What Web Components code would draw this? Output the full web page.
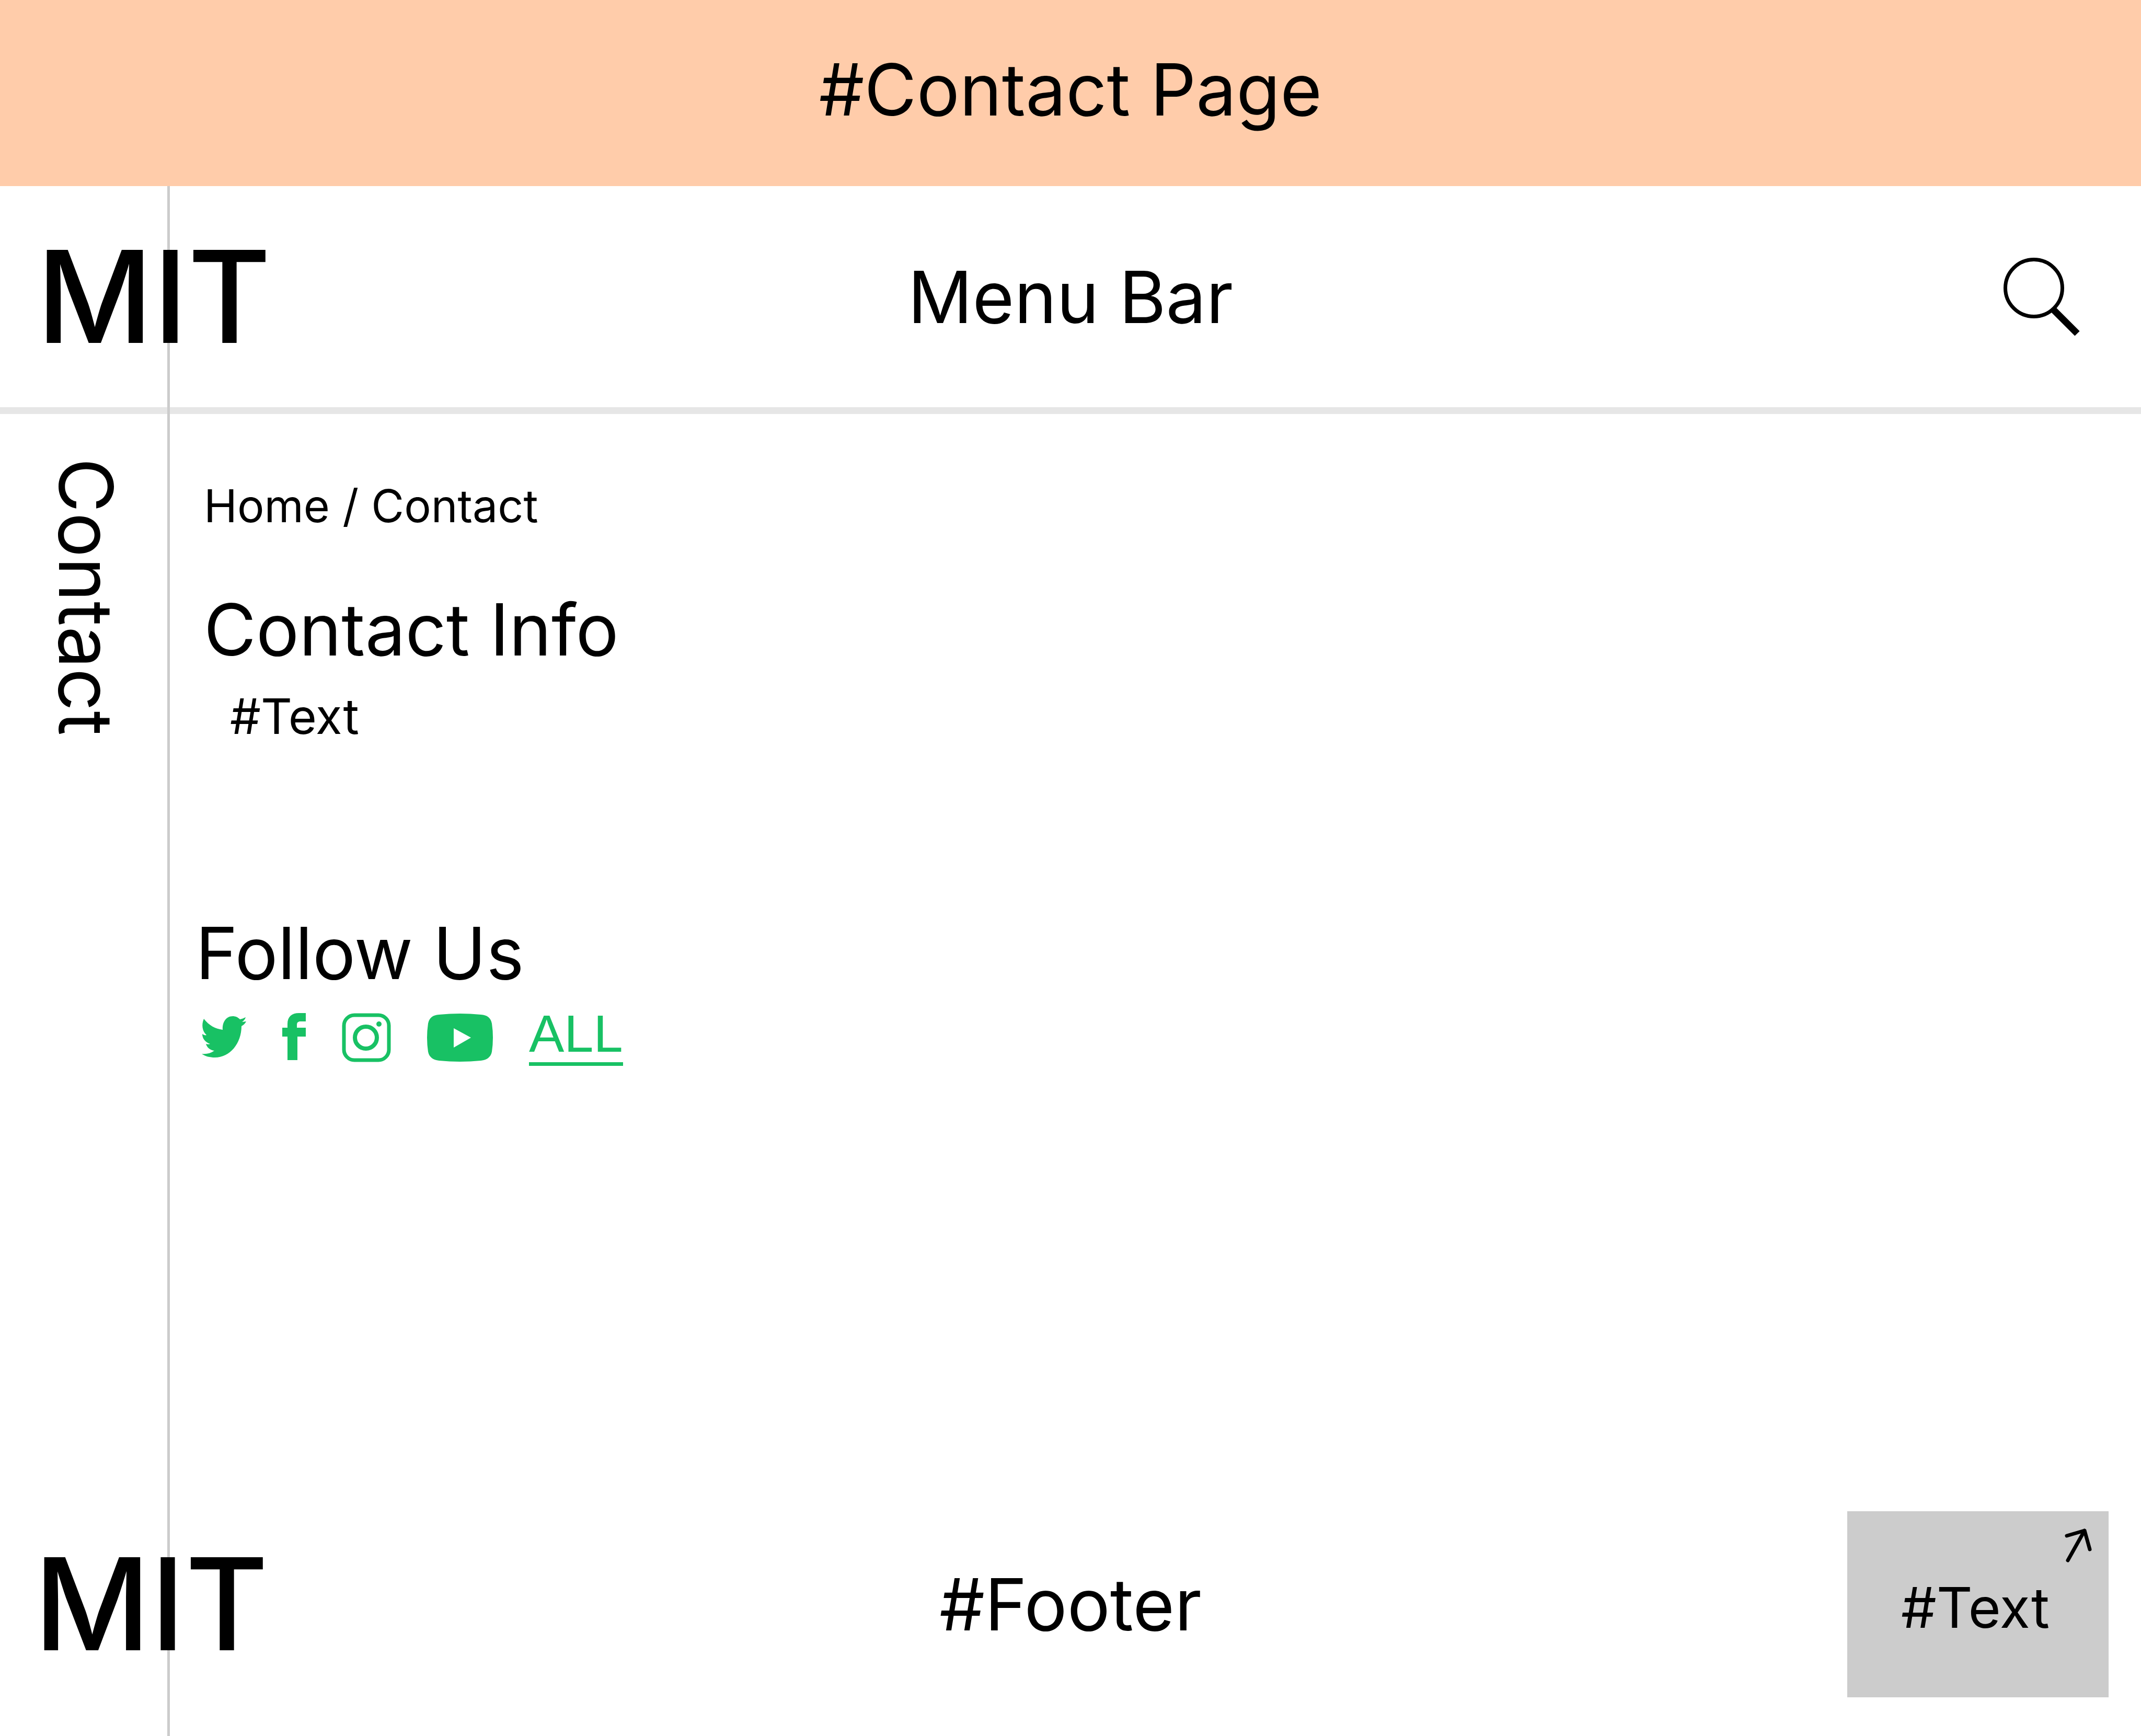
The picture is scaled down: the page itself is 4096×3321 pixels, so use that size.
<!DOCTYPE html>
<html lang="en">
<head>
<meta charset="utf-8">
<title>Contact Page</title>
<style>
  :root {
    --ink: #000;
    --peach: #ffccaa;
    --grey: #ccc;
    --rule: #e6e6e6;
    --green: #18c164;
    --rail: 320px;
    --size-title: 137px;
    --line-title: 164px;
  }
  body {
    margin: 0;
    background: #fff;
    color: var(--ink);
    font-family: Inter, "Liberation Sans", sans-serif;
    font-weight: 400;
  }
</style>
</head>
<body>
<contact-page></contact-page>

<template id="page-banner">
  <style>
    :host { display: flex; align-items: center; justify-content: center; box-sizing: border-box; height: 356px; padding-bottom: 14px; background: var(--peach); }
    h1 { margin: 0; font-size: var(--size-title); line-height: var(--line-title); font-weight: inherit; }
  </style>
  <h1><slot></slot></h1>
</template>

<template id="site-logo">
  <style>
    :host { display: block; }
    a { color: inherit; text-decoration: none; font-size: 244px; line-height: 300px; font-weight: 500; }
  </style>
  <a href="#home"><slot></slot></a>
</template>

<template id="menu-bar">
  <style>
    :host { display: grid; grid-template-columns: 1fr auto 1fr; align-items: center; height: 423px; border-bottom: 13px solid var(--rule); }
    site-logo { padding-left: 70px; z-index: 1; }
    nav { font-size: var(--size-title); line-height: var(--line-title); }
    button { justify-self: end; margin-right: 116px; padding: 0; border: 0; background: none; color: inherit; }
    svg { display: block; width: 150px; height: 150px; }
  </style>
  <site-logo>MIT</site-logo>
  <nav aria-label="Main"><slot></slot></nav>
  <button type="button" aria-label="Search">
    <svg viewBox="0 0 150 150" fill="none" stroke="currentColor">
      <circle cx="61" cy="58" r="54.5" stroke-width="7"/>
      <path d="M99 100L144 145" stroke-width="13"/>
    </svg>
  </button>
</template>

<template id="side-rail">
  <style>
    :host { display: flex; justify-content: center; flex: none; box-sizing: border-box; width: var(--rail); padding: 84px 0 0 10px; }
    span { writing-mode: vertical-rl; font-size: 143px; line-height: var(--line-title); }
  </style>
  <span><slot></slot></span>
</template>

<template id="bread-crumbs">
  <style>
    :host { display: block; font-size: 86px; line-height: 100px; }
    a { color: inherit; text-decoration: none; }
  </style>
  <nav aria-label="Breadcrumb"><a href="#home">Home</a> / <a href="#contact" aria-current="page">Contact</a></nav>
</template>

<template id="info-section">
  <style>
    :host { display: block; }
    h2 { margin: 0; font-size: var(--size-title); line-height: var(--line-title); font-weight: inherit; }
  </style>
  <h2><slot name="title"></slot></h2>
  <slot></slot>
</template>

<template id="social-links">
  <style>
    :host { display: flex; align-items: flex-start; gap: 67px; margin-top: 32px; padding-left: 10px; color: var(--green); }
    a { display: block; color: inherit; text-decoration: none; }
    svg { display: block; height: 96px; fill: currentColor; }
    .all { border-bottom: 7px solid; padding-bottom: 15px; font: 400 101px/80px "Liberation Sans", sans-serif; }
  </style>
  <a href="#twitter" aria-label="Twitter">
    <svg width="88" viewBox="0 0 88 96"><path d="M6 12C16 25 28 31 42 33C41 18 49 7 61 7C67 7 71 9 75 13C79 12 82 11 86 9C85 13 82 16 79 18L87 17C85 21 82 24 78 26C78 59 56 86 27 86C18 86 9 84 2 79C11 80 19 78 26 73C18 72 12 67 10 60C13 61 16 61 18 60C9 57 3 50 3 41C6 43 9 44 11 43C3 36 1 23 6 12Z"/></svg>
  </a>
  <a href="#facebook" aria-label="Facebook">
    <svg width="48" viewBox="0 0 48 96"><path d="M11 91V46H1V29H11V22C11 8 19 1 33 1H46V17H36C31 17 29 19 29 24V29H46V46H30V91Z"/></svg>
  </a>
  <a href="#instagram" aria-label="Instagram">
    <svg width="94" viewBox="0 0 94 96"><rect x="4" y="5" width="86" height="86" rx="20" fill="none" stroke="currentColor" stroke-width="7"/><circle cx="46" cy="48" r="21" fill="none" stroke="currentColor" stroke-width="8"/><circle cx="71" cy="22" r="5"/></svg>
  </a>
  <a href="#youtube" aria-label="YouTube">
    <svg width="130" viewBox="0 0 130 96"><path fill-rule="evenodd" d="M25 4Q65 0 105 4Q123 5 126 21Q130 48 126 75Q123 90 105 92Q65 96 25 92Q7 90 4 75Q0 48 4 21Q7 5 25 4ZM53 30V67L86 48Z"/></svg>
  </a>
  <a class="all" href="#all">ALL</a>
</template>

<template id="link-card">
  <style>
    :host { display: block; }
    a { position: relative; display: flex; align-items: center; justify-content: center; box-sizing: border-box; width: 500px; height: 356px; padding: 12px 10px 0 0; background: var(--grey); color: inherit; text-decoration: none; font-size: 107px; line-height: 132px; }
    svg { position: absolute; top: 31px; right: 30px; width: 56px; height: 68px; }
  </style>
  <a href="#text"><slot></slot>
    <svg viewBox="0 0 56 68" fill="none" stroke="currentColor" stroke-width="7" stroke-linecap="round" stroke-linejoin="round" aria-hidden="true"><path d="M8 63L40 6M6 16L40 6L50 42"/></svg>
  </a>
</template>

<template id="page-footer">
  <style>
    :host { display: grid; grid-template-columns: 1fr auto 1fr; align-items: center; padding-bottom: 74px; }
    site-logo { padding-left: 65px; z-index: 1; }
    p { margin: 0; font-size: var(--size-title); line-height: var(--line-title); }
    link-card { justify-self: end; padding-right: 62px; }
  </style>
  <site-logo>MIT</site-logo>
  <p><slot></slot></p>
  <link-card>#Text</link-card>
</template>

<template id="contact-page">
  <style>
    :host { display: flex; flex-direction: column; min-height: 100vh; }
    .body { position: relative; flex: 1; display: flex; flex-direction: column; }
    .body::before { content: ""; position: absolute; top: 0; bottom: 0; left: var(--rail); width: 5px; background: var(--grey); }
    .columns { flex: 1; display: flex; }
    main { flex: 1; padding: 126px 0 0 70px; }
    .info { margin-top: 104px; }
    .follow { margin: 315px 0 0 -16px; }
    p { margin: 28px 0 0 50px; font-size: 93px; line-height: 112px; }
  </style>
  <page-banner>#Contact Page</page-banner>
  <div class="body">
    <menu-bar>Menu Bar</menu-bar>
    <div class="columns">
      <side-rail>Contact</side-rail>
      <main>
        <bread-crumbs></bread-crumbs>
        <info-section class="info"><span slot="title">Contact Info</span><p>#Text</p></info-section>
        <info-section class="follow"><span slot="title">Follow Us</span><social-links></social-links></info-section>
      </main>
    </div>
    <page-footer>#Footer</page-footer>
  </div>
</template>

<script>
  class TemplateElement extends HTMLElement {
    constructor() {
      super();
      const template = document.getElementById(this.localName);
      this.attachShadow({ mode: "open" }).append(template.content.cloneNode(true));
    }
  }
  for (const name of ["page-banner", "site-logo", "menu-bar", "side-rail", "bread-crumbs", "info-section", "social-links", "link-card", "page-footer", "contact-page"]) {
    customElements.define(name, class extends TemplateElement {});
  }
</script>
</body>
</html>
